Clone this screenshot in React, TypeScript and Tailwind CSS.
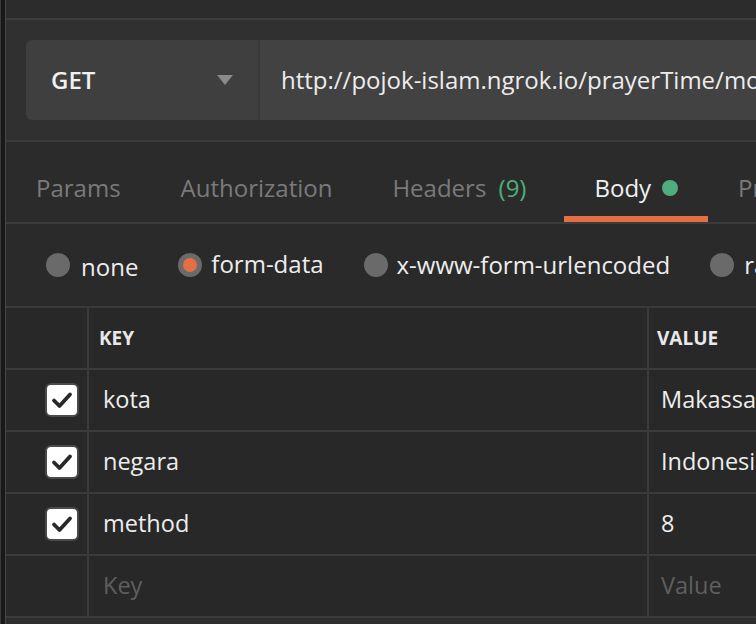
import React from 'react';

const rows = [
  { key: 'kota', value: 'Makassar' },
  { key: 'negara', value: 'Indonesia' },
  { key: 'method', value: '8' },
];

function Check() {
  return (
    <div className="w-[34px] h-[34px] rounded-[6px] bg-white border-2 border-[#4a4a4a] flex items-center justify-center">
      <svg width="22" height="18" viewBox="0 0 22 18">
        <path d="M3 9.5 L8.5 15 L19 3.5" fill="none" stroke="#282828" strokeWidth="3.8" strokeLinecap="round" strokeLinejoin="round" />
      </svg>
    </div>
  );
}

function Radio({ checked }: { checked?: boolean }) {
  return (
    <div className="w-[24px] h-[24px] rounded-full bg-[#6a6a6a] flex items-center justify-center shrink-0">
      {checked && <div className="w-[14px] h-[14px] rounded-full bg-[#e46f45]" />}
    </div>
  );
}

export default function App() {
  const tabs = ['Params', 'Authorization'];
  return (
    <div
      className="w-[756px] h-[624px] overflow-hidden flex bg-[#282828] text-[#ededed] whitespace-nowrap"
      style={{ fontFamily: '"Open Sans", "Noto Sans", sans-serif' }}
    >
      {/* left edge */}
      <div className="w-[1px] shrink-0 bg-[#3a3a3a]" />
      <div className="w-[4px] shrink-0 bg-[#191919]" />
      <div className="w-[1px] shrink-0 bg-[#474747]" />

      <div className="flex-1 min-w-0 flex flex-col overflow-hidden">
        <div className="h-[18px] bg-[#2c2c2c] shrink-0" />
        <div className="h-[2px] bg-[#3d3d3d] shrink-0" />

        {/* request bar */}
        <div className="h-[120px] bg-[#303030] pt-[20px] pl-[20px] shrink-0">
          <div className="h-[80px] flex rounded-l-[6px] overflow-hidden">
            <div className="w-[232px] shrink-0 bg-[#3f3f3f] flex items-center justify-between pl-[25px] pr-[25px]">
              <span className="text-[24px] font-semibold text-[#f0f0f0]">GET</span>
              <svg width="16" height="10" viewBox="0 0 16 10">
                <path d="M0 0 H16 L8 10 Z" fill="#8a8a8a" />
              </svg>
            </div>
            <div className="w-[2px] shrink-0 bg-[#383838]" />
            <div className="flex-1 min-w-0 overflow-hidden bg-[#424242] flex items-center pl-[21px] text-[24px] text-[#ececec]">
              http://pojok-islam.ngrok.io/prayerTime/monthly
            </div>
          </div>
        </div>
        <div className="h-[2px] bg-[#3b3b3b] shrink-0" />

        {/* tabs */}
        <div className="h-[80px] bg-[#2b2b2b] flex shrink-0 text-[24px]">
          {tabs.map((t) => (
            <div key={t} className="shrink-0 px-[30px] pt-[28px] text-[#7a7a7a]">
              {t}
            </div>
          ))}
          <div className="shrink-0 px-[30px] pt-[28px] text-[#7a7a7a]">
            Headers <span className="text-[#4fae7e] ml-[6px]">(9)</span>
          </div>
          <div className="shrink-0 ml-[8px] px-[30px] pt-[28px] flex items-start gap-[11px] border-b-[6px] border-[#e46f45] text-[#f0f0f0]">
            Body
            <span className="mt-[10px] w-[16px] h-[16px] rounded-full bg-[#4fae7e]" />
          </div>
          <div className="shrink-0 px-[30px] pt-[28px] text-[#7a7a7a]">Pre-request Script</div>
        </div>
        <div className="h-[2px] bg-[#3b3b3b] shrink-0" />

        {/* body type radios */}
        <div className="h-[82px] bg-[#2a2a2a] flex items-center pl-[40px] shrink-0 text-[24px]">
          <Radio />
          <span className="ml-[11px] mt-[4px]">none</span>
          <div className="ml-[40px]"><Radio checked /></div>
          <span className="ml-[9px] -mt-[2px]">form-data</span>
          <div className="ml-[40px]"><Radio /></div>
          <span className="ml-[9px]">x-www-form-urlencoded</span>
          <div className="ml-[40px]"><Radio /></div>
          <span className="ml-[10px]">raw</span>
        </div>
        <div className="h-[2px] bg-[#3b3b3b] shrink-0" />

        {/* table */}
        <div className="flex flex-col shrink-0">
          <div className="h-[60px] flex">
            <div className="w-[81px] shrink-0" />
            <div className="w-[2px] shrink-0 bg-[#3b3b3b]" />
            <div className="w-[558px] shrink-0 flex items-center pl-[10px] text-[19px] font-bold text-[#e8e8e8]">KEY</div>
            <div className="w-[2px] shrink-0 bg-[#3b3b3b]" />
            <div className="flex-1 min-w-0 overflow-hidden flex items-center pl-[8px] text-[19px] font-bold text-[#e8e8e8]">VALUE</div>
          </div>
          {rows.map((r) => (
            <React.Fragment key={r.key}>
              <div className="h-[2px] bg-[#3b3b3b]" />
              <div className="h-[60px] flex">
                <div className="w-[81px] shrink-0 flex items-center justify-end pr-[8px]">
                  <Check />
                </div>
                <div className="w-[2px] shrink-0 bg-[#3b3b3b]" />
                <div className="w-[558px] shrink-0 flex items-center pl-[14px] text-[23.5px]">{r.key}</div>
                <div className="w-[2px] shrink-0 bg-[#3b3b3b]" />
                <div className="flex-1 min-w-0 overflow-hidden flex items-center pl-[12px] text-[23.5px]">{r.value}</div>
              </div>
            </React.Fragment>
          ))}
          <div className="h-[2px] bg-[#3b3b3b]" />
          <div className="h-[60px] flex">
            <div className="w-[81px] shrink-0" />
            <div className="w-[2px] shrink-0 bg-[#3b3b3b]" />
            <div className="w-[558px] shrink-0 flex items-center pl-[14px] text-[23.5px] text-[#5f5f5f]">Key</div>
            <div className="w-[2px] shrink-0 bg-[#3b3b3b]" />
            <div className="flex-1 min-w-0 flex items-center pl-[12px] text-[23.5px] text-[#5f5f5f]">Value</div>
          </div>
          <div className="h-[2px] bg-[#3b3b3b]" />
        </div>
        <div className="flex-1 bg-[#2d2d2d]" />
      </div>
    </div>
  );
}
